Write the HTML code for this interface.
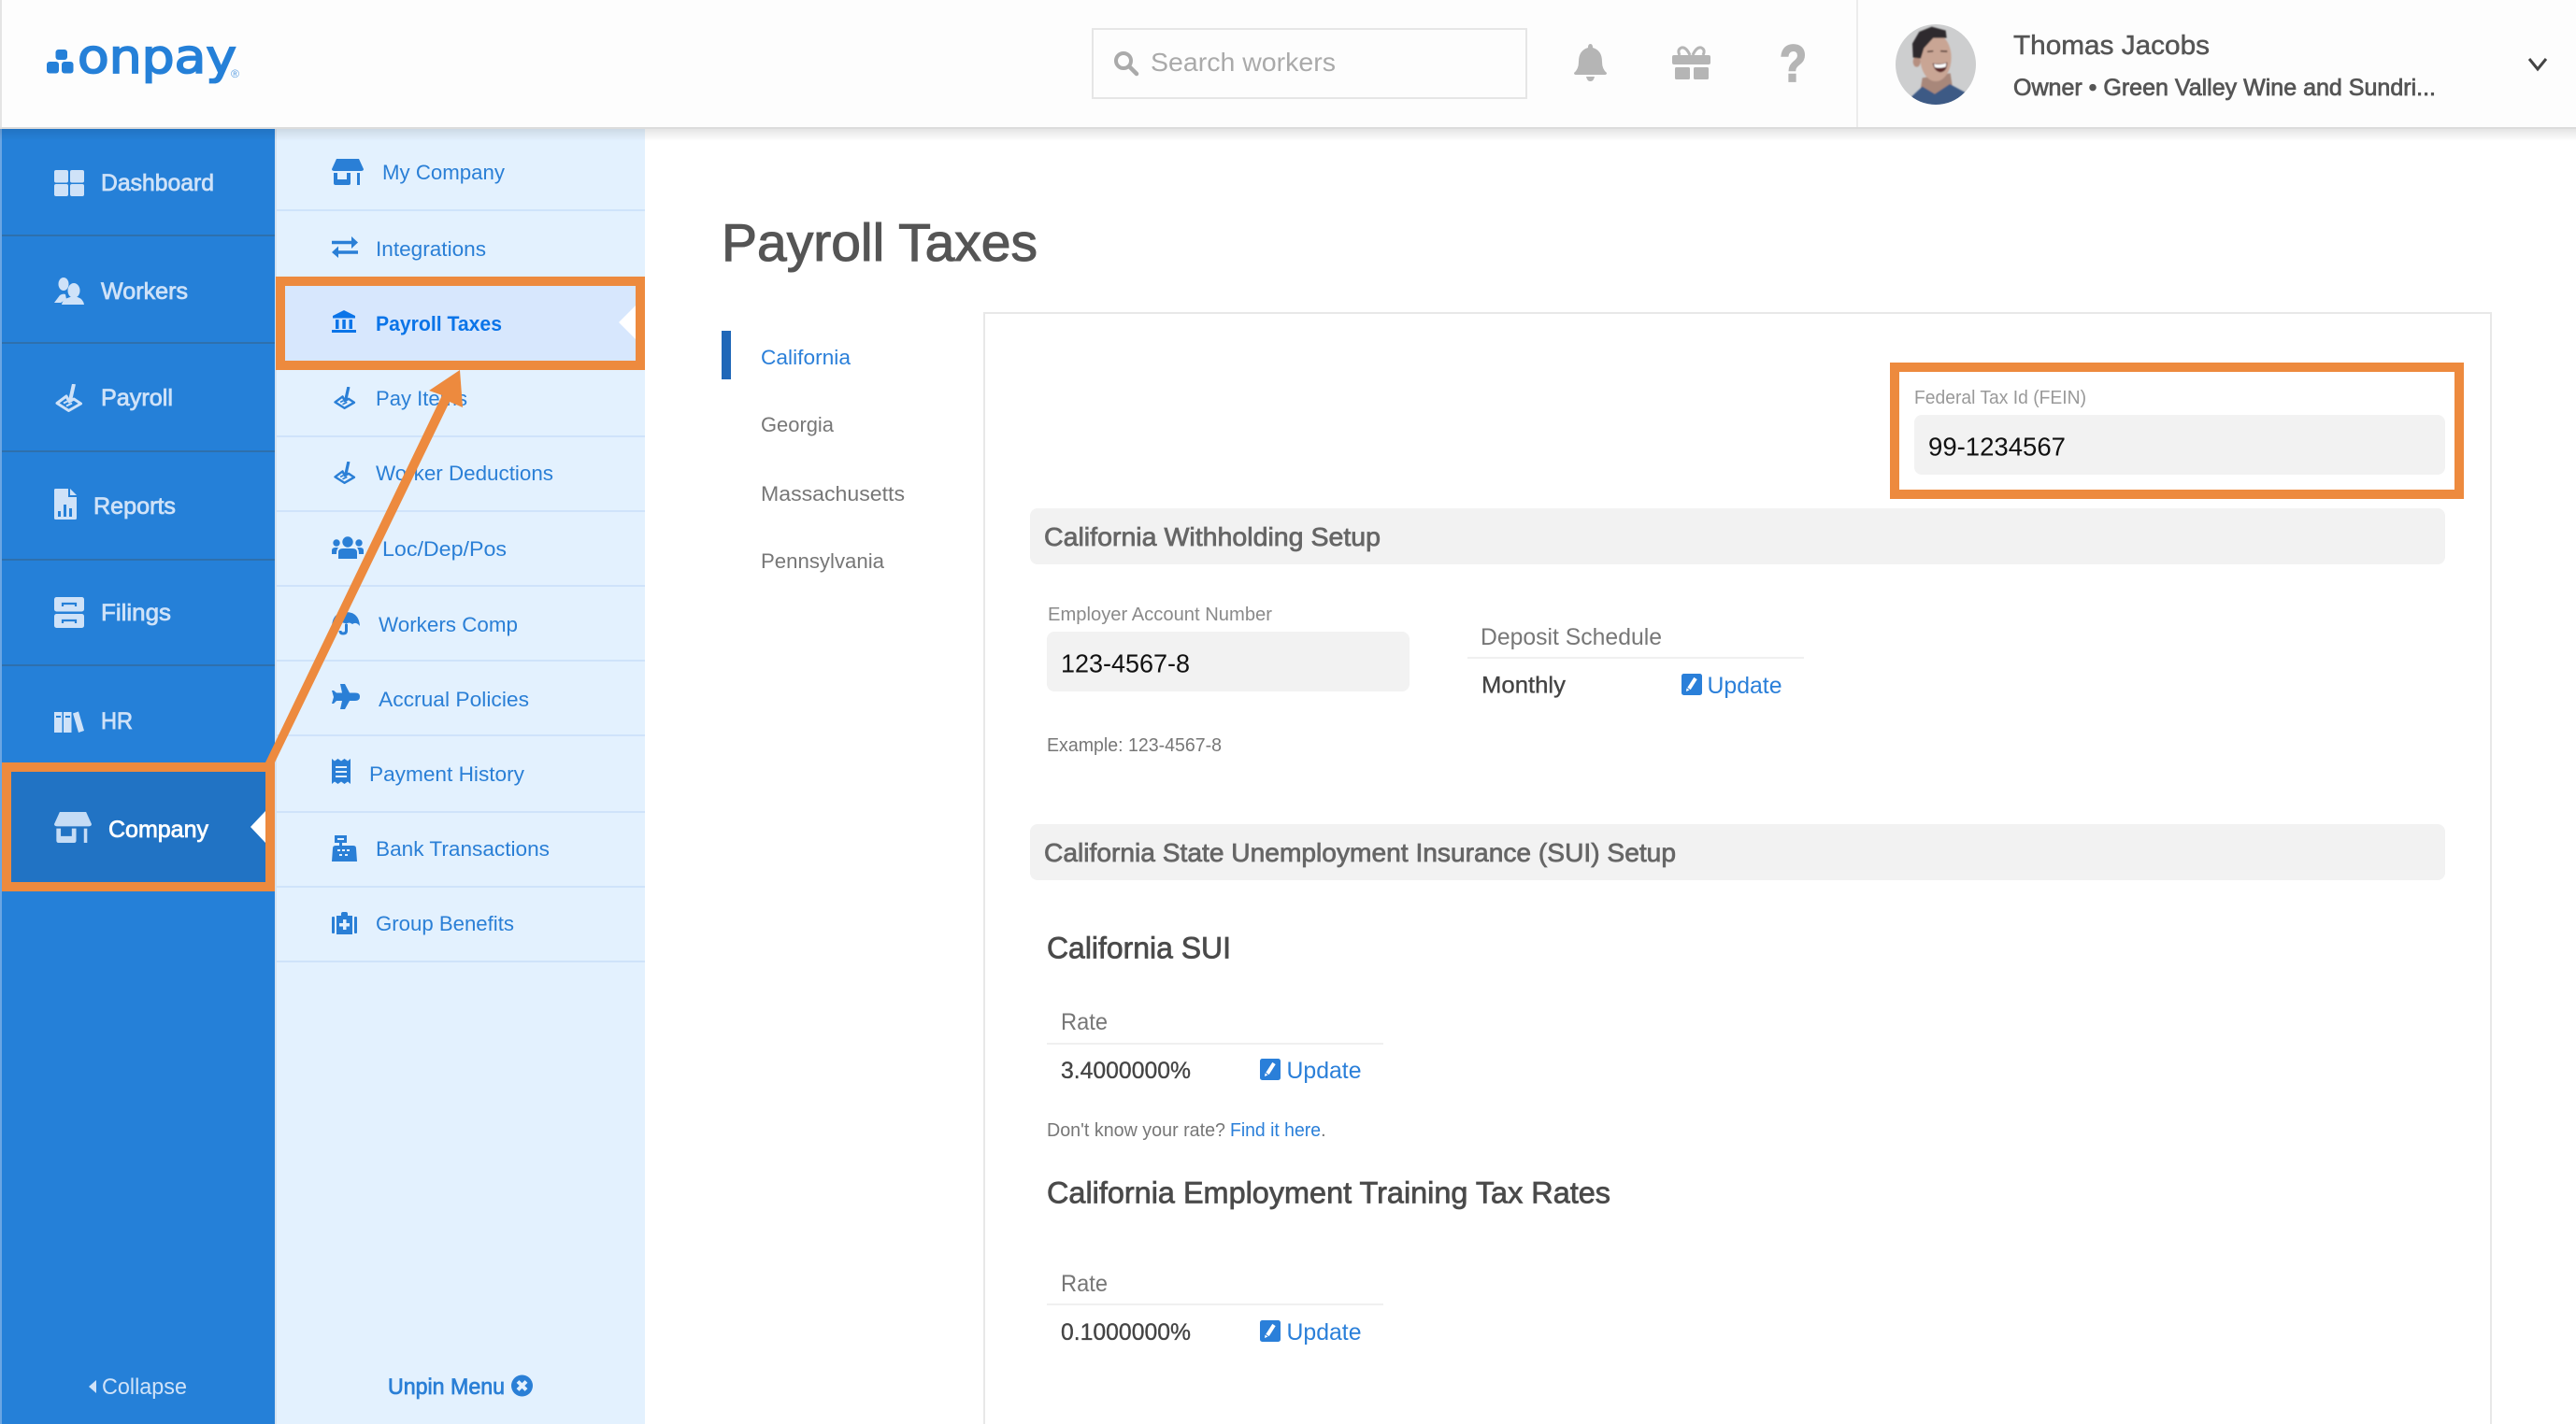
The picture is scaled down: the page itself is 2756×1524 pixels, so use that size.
<!DOCTYPE html>
<html lang="en"><head><meta charset="utf-8"><title>Payroll Taxes</title>
<style>
html,body{margin:0;padding:0;background:#fff;width:2756px;height:1524px;overflow:hidden}
svg{display:block}
text{font-family:"Liberation Sans",sans-serif;white-space:pre}
.m{stroke-width:.75px}
.nav{font-size:25px;fill:#cfe2f8;stroke:#cfe2f8}
.sub{font-size:22.5px;fill:#2a7fd6}
.st{font-size:22.5px;fill:#777}
.up{font-size:25px;fill:#2a7fd9}
.lab{font-size:20.5px;fill:#8a8a8a}
.val{font-size:28px;fill:#111}
.hd{font-size:28px;fill:#666;stroke:#666}
.h2{font-size:32.5px;fill:#4a4a4a;stroke:#4a4a4a}
.th{font-size:25px;fill:#777}
.td{font-size:25px;fill:#444;stroke:#444;stroke-width:.35px}
</style></head>
<body>
<svg xmlns="http://www.w3.org/2000/svg" width="2756" height="1524" viewBox="0 0 2756 1524">
<defs>
<linearGradient id="sh" x1="0" y1="0" x2="0" y2="1"><stop offset="0" stop-color="#000" stop-opacity=".1"/><stop offset="1" stop-color="#000" stop-opacity="0"/></linearGradient>
<clipPath id="av"><circle cx="213" cy="177" r="129"/></clipPath>
<filter id="bl"><feGaussianBlur stdDeviation="2.500"/></filter>
<symbol id="store" viewBox="0 0 34 28"><path fill="currentColor" d="M5 0H29L34 11Q34 13 31 13H3Q0 13 0 11Z"/><path fill="currentColor" d="M2 15H6V22H16V15H20V26Q20 28 18 28H4Q2 28 2 26Z"/><rect fill="currentColor" x="27" y="15" width="3" height="13"/></symbol>
<symbol id="sign" viewBox="0 0 29 30"><path d="M20 0L16 18" stroke="currentColor" stroke-width="4" fill="none"/><path d="M2 20.500L12 13L15 19L20 16L27.500 21L14.500 28.500Z" stroke="currentColor" stroke-width="3" fill="none" stroke-linejoin="round"/><path d="M9 20.500L13 18.500M12 23.500L18 20.500" stroke="currentColor" stroke-width="2" fill="none"/></symbol>
<symbol id="edit" viewBox="0 0 22 23"><rect width="22" height="23" rx="2.500" fill="#2a7fd9"/><path d="M15 5L8 16" stroke="#fff" stroke-width="4"/><path d="M5.500 15.500L5 19L8.500 17.500Z" fill="#fff"/></symbol>
</defs>

<!-- page -->
<rect width="2756" height="1524" fill="#fff"/>

<!-- sidebar -->
<rect x="0" y="138" width="2" height="1386" fill="#6ba6e3"/>
<rect x="2" y="138" width="292" height="1386" fill="#2580d8"/>
<rect x="294" y="138" width="2" height="1386" fill="#d5e2f0"/>
<rect x="296" y="138" width="394" height="1386" fill="#e3f1fe"/>
<g fill="#2e70ad">
<rect x="2" y="251" width="292" height="2"/><rect x="2" y="366" width="292" height="2"/><rect x="2" y="482" width="292" height="2"/><rect x="2" y="598" width="292" height="2"/><rect x="2" y="711" width="292" height="2"/>
</g>
<rect x="2" y="816" width="292" height="138" fill="#2173c4"/>

<!-- primary nav icons -->
<g fill="#cfe2f8">
<rect x="58" y="182" width="15" height="13.500" rx="2"/><rect x="75" y="182" width="15" height="13.500" rx="2"/><rect x="58" y="197" width="15" height="13" rx="2"/><rect x="75" y="197" width="15" height="13" rx="2"/>
<ellipse cx="68" cy="304" rx="5.500" ry="7"/><path d="M58 324L64 316Q67 314 70 315L71 320L65 324Z"/>
<ellipse cx="79" cy="311" rx="6.500" ry="8"/><path d="M66 326Q67 320 75 318H83Q89 320 90 326Z"/>
<path d="M58 524.500Q58 523 59.500 523H73V532H82V554.500Q82 556 80.500 556H59.500Q58 556 58 554.500Z"/><path d="M75 523L82 530H75Z"/>
<rect x="58" y="639" width="32" height="15.500" rx="2.500"/><rect x="58" y="657" width="32" height="15" rx="2.500"/>
<rect x="58" y="762" width="8.500" height="22"/><rect x="68" y="762" width="8.500" height="22"/><path d="M78 763.500L84 761.500L90 782L84 784Z"/>
</g>
<use href="#sign" x="59" y="411" width="29" height="30" color="#cfe2f8"/>
<g fill="#2580d8"><rect x="62" y="547" width="3" height="6"/><rect x="68" y="540" width="3" height="13"/><rect x="74" y="544" width="3" height="9"/><rect x="60" y="766" width="5" height="2"/><rect x="70" y="766" width="5" height="2"/></g>
<g fill="none" stroke="#2580d8" stroke-width="2.200"><path d="M67 649V646H81V649"/><path d="M67 667V664H81V667"/></g>
<use href="#store" x="58" y="869" width="40" height="33" color="#c5dcf5"/>

<!-- primary nav text -->
<text class="nav m" x="108" y="204" textLength="121" lengthAdjust="spacingAndGlyphs">Dashboard</text>
<text class="nav m" x="108" y="320" textLength="93" lengthAdjust="spacingAndGlyphs">Workers</text>
<text class="nav m" x="108" y="434" textLength="77" lengthAdjust="spacingAndGlyphs">Payroll</text>
<text class="nav m" x="100" y="550" textLength="88" lengthAdjust="spacingAndGlyphs">Reports</text>
<text class="nav m" x="108" y="664" textLength="75" lengthAdjust="spacingAndGlyphs">Filings</text>
<text class="nav m" x="108" y="780" textLength="34" lengthAdjust="spacingAndGlyphs">HR</text>
<text class="nav m" x="116" y="896" textLength="107" lengthAdjust="spacingAndGlyphs" style="fill:#fff;stroke:#fff">Company</text>
<path d="M268 885L284 868V902Z" fill="#fff"/>
<path d="M103 1477V1491L95 1484Z" fill="#cfe2f8"/>
<text x="109" y="1492" font-size="24" fill="#cfe2f8" textLength="91" lengthAdjust="spacingAndGlyphs">Collapse</text>

<!-- subnav dividers -->
<g fill="#cfe3fa"><rect x="296" y="224" width="394" height="2"/><rect x="296" y="466" width="394" height="2"/><rect x="296" y="546" width="394" height="2"/><rect x="296" y="626" width="394" height="2"/><rect x="296" y="706" width="394" height="2"/><rect x="296" y="786" width="394" height="2"/><rect x="296" y="868" width="394" height="2"/><rect x="296" y="948" width="394" height="2"/><rect x="296" y="1028" width="394" height="2"/></g>

<!-- payroll taxes active -->
<rect x="296" y="296" width="394" height="100" fill="#d7e7fd"/>
<path d="M662 345L680 327V363Z" fill="#fff"/>

<!-- subnav icons -->
<use href="#store" x="355" y="170" width="34" height="28" color="#2a7fd6"/>
<g fill="none" stroke="#2a7fd6" stroke-width="3.500"><path d="M355 259.500H379"/><path d="M383 270H359"/></g>
<g fill="#2a7fd6"><path d="M376 253L383 259.500L376 266Z"/><path d="M362 263.500L355 270L362 276Z"/></g>
<g fill="#0a74e8"><path d="M368 332L380 338V340.500H356V338Z"/><rect x="359" y="342" width="3.500" height="10"/><rect x="366.300" y="342" width="3.500" height="10"/><rect x="373.500" y="342" width="3.500" height="10"/><rect x="355" y="353" width="26" height="3"/></g>
<use href="#sign" x="356" y="414" width="25" height="24" color="#2a7fd6"/>
<use href="#sign" x="356" y="494" width="25" height="24" color="#2a7fd6"/>
<g fill="#2a7fd6">
<circle cx="372" cy="580" r="5.700"/><circle cx="360" cy="581" r="3.700"/><circle cx="384" cy="581" r="3.700"/>
<path d="M362 598V591Q362 587 367 587H377Q382 587 382 591V598Z"/><path d="M355 593V589Q355 586 359 586H362Q360 588 360 593Z"/><path d="M389 593V589Q389 586 385 586H382Q384 588 384 593Z"/>
<path d="M355 670Q356 655 370 655Q384 655 385 670Q381 665 377 668Q373 665 370.500 668Q367 665 363 668Q359 665 355 670Z"/>
<path d="M385 745.500Q385 741.500 380 741.500L374 741.500L369 732L364 732L366 741.500L360 741.500L357 739L355 739L357 746L355 753L357 753L360 750L366 750L364 759L369 759L374 750L380 750Q385 750 385 745.500Z"/>
<path d="M355 812L358 814.500L361.500 812L365 814.500L368.500 812L372 814.500L375 812V839L372 836.500L368.500 839L365 836.500L361.500 839L358 836.500L355 839Z"/>
<path d="M358 894H371V902H366V905H378Q381 905 381 908L382 922H355L356 908Q356 905 359 905H363V902H358Z"/>
<path d="M360 980H365V978Q365 976 367 976H370Q372 976 372 978V980H377V1000H360Z"/><rect x="355" y="981" width="3" height="18" rx="1"/><rect x="379" y="981" width="3" height="18" rx="1"/>
</g>
<path d="M370.500 668V675Q370.500 678 367 678Q364 678 364 675" fill="none" stroke="#2a7fd6" stroke-width="3"/>
<g fill="#e3f1fe"><rect x="359" y="820" width="12" height="2"/><rect x="359" y="825" width="12" height="2"/><rect x="359" y="830" width="12" height="2"/><rect x="361" y="897" width="7" height="2"/><rect x="361" y="909" width="3" height="2"/><rect x="366" y="909" width="3" height="2"/><rect x="371" y="909" width="3" height="2"/><rect x="363" y="914" width="3" height="2"/><rect x="369" y="914" width="3" height="2"/><rect x="367" y="984" width="3.500" height="11"/><rect x="363" y="988" width="11" height="3.500"/></g>

<!-- subnav text -->
<text class="sub" x="409" y="192" textLength="131" lengthAdjust="spacingAndGlyphs">My Company</text>
<text class="sub" x="402" y="274" textLength="118" lengthAdjust="spacingAndGlyphs">Integrations</text>
<text class="sub" x="402" y="354" font-weight="bold" style="fill:#0a74e8" textLength="135" lengthAdjust="spacingAndGlyphs">Payroll Taxes</text>
<text class="sub" x="402" y="434" textLength="98" lengthAdjust="spacingAndGlyphs">Pay Items</text>
<text class="sub" x="402" y="514" textLength="190" lengthAdjust="spacingAndGlyphs">Worker Deductions</text>
<text class="sub" x="409" y="595" textLength="133" lengthAdjust="spacingAndGlyphs">Loc/Dep/Pos</text>
<text class="sub" x="405" y="676" textLength="149" lengthAdjust="spacingAndGlyphs">Workers Comp</text>
<text class="sub" x="405" y="756" textLength="161" lengthAdjust="spacingAndGlyphs">Accrual Policies</text>
<text class="sub" x="395" y="836" textLength="166" lengthAdjust="spacingAndGlyphs">Payment History</text>
<text class="sub" x="402" y="916" textLength="186" lengthAdjust="spacingAndGlyphs">Bank Transactions</text>
<text class="sub" x="402" y="996" textLength="148" lengthAdjust="spacingAndGlyphs">Group Benefits</text>
<text x="415" y="1492" font-size="24" fill="#2a7fd6" stroke="#2a7fd6" class="m" textLength="125" lengthAdjust="spacingAndGlyphs">Unpin Menu</text>
<circle cx="558.500" cy="1483" r="11.500" fill="#2a7fd6"/>
<path d="M554 1478.500L563 1487.500M563 1478.500L554 1487.500" stroke="#e3f1fe" stroke-width="4"/>

<!-- header -->
<rect width="2756" height="137" fill="#fdfdfd"/>
<rect width="2" height="137" fill="#e4e4e4"/>
<rect y="136" width="2756" height="2" fill="#dcdcdc"/>
<rect y="138" width="2756" height="13" fill="url(#sh)"/>
<!-- logo -->
<g fill="#2580d8">
<rect x="59.500" y="53" width="12.500" height="11" rx="3"/><rect x="50" y="66" width="13" height="12.500" rx="3"/><rect x="66" y="66" width="12.500" height="12.500" rx="3"/>
</g>
<text x="83" y="78" font-size="50" style="font-family:'DejaVu Sans',sans-serif" fill="#2580d8" stroke="#2580d8" stroke-width="1.800" textLength="170" lengthAdjust="spacingAndGlyphs">onpay</text>
<text x="247" y="83" font-size="12" fill="#5c9fe2" textLength="9" lengthAdjust="spacingAndGlyphs">®</text>
<!-- search -->
<rect x="1169" y="31" width="464" height="74" fill="#fdfdfd" stroke="#e6e6e6" stroke-width="2"/>
<circle cx="1202" cy="65" r="8" fill="none" stroke="#aaa" stroke-width="4"/>
<path d="M1208 71L1216 79" stroke="#aaa" stroke-width="4.500" stroke-linecap="round"/>
<text x="1231" y="76" font-size="28" fill="#aaa" textLength="198" lengthAdjust="spacingAndGlyphs">Search workers</text>
<!-- bell -->
<g fill="#b5b5b5">
<path d="M1701.500 47Q1704 47 1704 51Q1714 54 1714 66Q1714 74 1719 78Q1719 80 1717 80H1686Q1684 80 1684 78Q1689 74 1689 66Q1689 54 1699 51Q1699 47 1701.500 47Z"/>
<path d="M1697 82H1706Q1705 87 1701.500 87Q1698 87 1697 82Z"/>
<rect x="1789" y="59" width="41" height="10" rx="2"/><rect x="1792" y="72" width="16" height="13" rx="1.500"/><rect x="1812" y="72" width="16" height="13" rx="1.500"/>
</g>
<g fill="none" stroke="#b5b5b5" stroke-width="3"><path d="M1808 59Q1804 50 1799 51Q1794 53 1797 59"/><path d="M1811 59Q1815 50 1820 51Q1825 53 1822 59"/></g>
<text x="1904" y="87" font-size="56" font-weight="bold" fill="#b5b5b5" stroke="#b5b5b5" stroke-width="1.800" textLength="29" lengthAdjust="spacingAndGlyphs">?</text>
<rect x="1986" y="0" width="2" height="136" fill="#ececec"/>
<!-- avatar -->
<g transform="translate(2000,10) scale(.33333)">
<circle cx="213" cy="177" r="129" fill="#cdcecf"/>
<g clip-path="url(#av)"><g filter="url(#bl)">
<path d="M170 220L260 205L268 258L200 275L165 252Z" fill="#a8877a"/>
<path d="M125 290L170 248L210 272L258 240L310 268L345 310H125Z" fill="#3c5a85"/>
<ellipse cx="213" cy="155" rx="50" ry="76" fill="#c9a594"/>
<ellipse cx="152" cy="168" rx="12" ry="17" fill="#b58f80"/>
<path d="M140 155L138 110L160 72L200 56L245 68L248 92L205 92L175 125L165 158Z" fill="#2e2b2d"/>
<path d="M203 173Q228 178 250 170Q250 200 228 202Q208 200 203 173Z" fill="#5a2a2a"/>
<path d="M207 175Q228 180 247 172L245 185Q226 190 210 186Z" fill="#fff"/>
<path d="M186 136L205 134M228 134L250 135" stroke="#5a4038" stroke-width="5"/>
</g></g></g>
<!-- user -->
<text x="2154" y="58" font-size="29" fill="#555" stroke="#555" stroke-width=".5" textLength="210" lengthAdjust="spacingAndGlyphs">Thomas Jacobs</text>
<text class="m" x="2154" y="102" font-size="25" fill="#555" stroke="#555" textLength="452" lengthAdjust="spacingAndGlyphs">Owner • Green Valley Wine and Sundri...</text>
<path d="M2706 63L2715 74L2724 63" fill="none" stroke="#444" stroke-width="3"/>

<!-- main -->
<text x="772" y="279" font-size="56.500" fill="#555" stroke="#555" stroke-width="1.100" textLength="338" lengthAdjust="spacingAndGlyphs">Payroll Taxes</text>
<rect x="772" y="354" width="10" height="52" fill="#1f67b8"/>
<text class="st" style="fill:#2a7fd9" x="814" y="390" textLength="96" lengthAdjust="spacingAndGlyphs">California</text>
<text class="st" x="814" y="462" textLength="78" lengthAdjust="spacingAndGlyphs">Georgia</text>
<text class="st" x="814" y="536" textLength="154" lengthAdjust="spacingAndGlyphs">Massachusetts</text>
<text class="st" x="814" y="608" textLength="132" lengthAdjust="spacingAndGlyphs">Pennsylvania</text>

<!-- card -->
<path d="M1053 1524V335H2665V1524" fill="#fff" stroke="#e8e8e8" stroke-width="2"/>
<text class="lab" style="fill:#999" x="2048" y="432" textLength="184" lengthAdjust="spacingAndGlyphs">Federal Tax Id (FEIN)</text>
<rect x="2048" y="444" width="568" height="64" rx="8" fill="#f2f2f2"/>
<text class="val" x="2063" y="487.500" textLength="147" lengthAdjust="spacingAndGlyphs">99-1234567</text>

<rect x="1102" y="544" width="1514" height="60" rx="8" fill="#f2f2f2"/>
<text class="hd m" x="1117" y="584" textLength="360" lengthAdjust="spacingAndGlyphs">California Withholding Setup</text>
<text class="lab" x="1121" y="664" textLength="240" lengthAdjust="spacingAndGlyphs">Employer Account Number</text>
<rect x="1120" y="676" width="388" height="64" rx="8" fill="#f2f2f2"/>
<text class="val" x="1135" y="719.500" textLength="138" lengthAdjust="spacingAndGlyphs">123-4567-8</text>
<text class="lab" style="fill:#777" x="1120" y="804" textLength="187" lengthAdjust="spacingAndGlyphs">Example: 123-4567-8</text>
<text class="th" x="1584" y="690" textLength="194" lengthAdjust="spacingAndGlyphs">Deposit Schedule</text>
<rect x="1570" y="703" width="360" height="2" fill="#f0f0f0"/>
<text class="td m" x="1585" y="741.500" textLength="90" lengthAdjust="spacingAndGlyphs">Monthly</text>
<use href="#edit" x="1799" y="721" width="22" height="23"/>
<text class="up" x="1826.500" y="742" textLength="80" lengthAdjust="spacingAndGlyphs">Update</text>

<rect x="1102" y="882" width="1514" height="60" rx="8" fill="#f2f2f2"/>
<text class="hd m" x="1117" y="922" textLength="676" lengthAdjust="spacingAndGlyphs">California State Unemployment Insurance (SUI) Setup</text>

<text class="h2 m" x="1120" y="1025.500" textLength="197" lengthAdjust="spacingAndGlyphs">California SUI</text>
<text class="th" x="1135" y="1102" textLength="50" lengthAdjust="spacingAndGlyphs">Rate</text>
<rect x="1120" y="1116" width="360" height="2" fill="#f0f0f0"/>
<text class="td" x="1135" y="1154" textLength="139" lengthAdjust="spacingAndGlyphs">3.4000000%</text>
<use href="#edit" x="1348" y="1133" width="22" height="23"/>
<text class="up" x="1376.500" y="1154" textLength="80" lengthAdjust="spacingAndGlyphs">Update</text>
<text class="lab" style="fill:#777" x="1120" y="1216" textLength="191" lengthAdjust="spacingAndGlyphs">Don't know your rate?</text>
<text class="lab" style="fill:#2a7fd9" x="1316" y="1216" textLength="97" lengthAdjust="spacingAndGlyphs">Find it here</text>
<text class="lab" style="fill:#777" x="1413" y="1216">.</text>

<text class="h2 m" x="1120" y="1287.500" textLength="603" lengthAdjust="spacingAndGlyphs">California Employment Training Tax Rates</text>
<text class="th" x="1135" y="1382" textLength="50" lengthAdjust="spacingAndGlyphs">Rate</text>
<rect x="1120" y="1395" width="360" height="2" fill="#f0f0f0"/>
<text class="td" x="1135" y="1434" textLength="139" lengthAdjust="spacingAndGlyphs">0.1000000%</text>
<use href="#edit" x="1348" y="1413" width="22" height="23"/>
<text class="up" x="1376.500" y="1434" textLength="80" lengthAdjust="spacingAndGlyphs">Update</text>

<!-- annotations -->
<g fill="none" stroke="#ed8a3e" stroke-width="10">
<rect x="7" y="821" width="282" height="128"/>
<rect x="300" y="301" width="385" height="90"/>
<rect x="2027" y="393" width="604" height="136"/>
</g>
<path d="M283 818L294 816L481 430L495 436L492 396L459 418L473 423Z" fill="#ed8a3e"/>
</svg>
</body></html>
